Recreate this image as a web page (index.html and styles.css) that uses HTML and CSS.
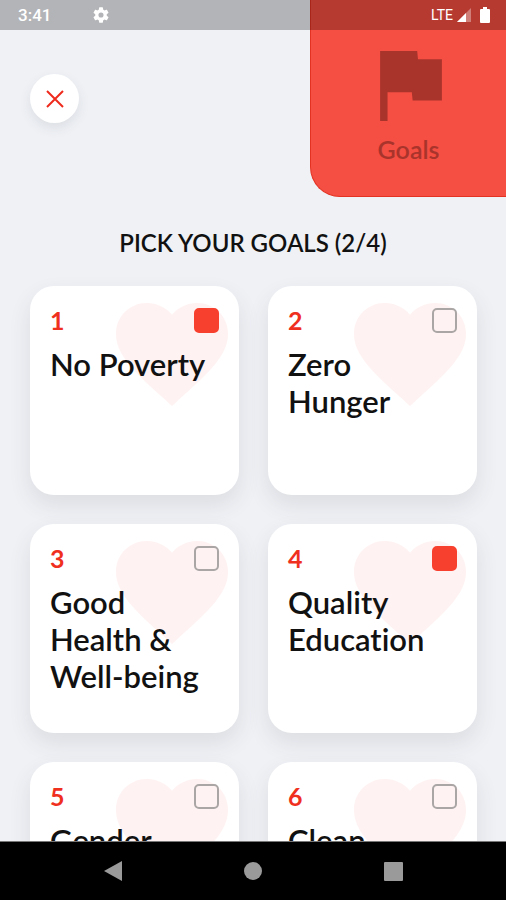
FILE: index.html
```html
<!DOCTYPE html>
<html lang="en">
<head>
<meta charset="utf-8">
<meta name="viewport" content="width=device-width, initial-scale=1">
<title>Pick your goals</title>
<link rel="stylesheet" href="styles.css">
</head>
<body>
<svg class="defs" aria-hidden="true">
  <symbol id="heart" viewBox="2 3 20 18.35"><path d="M12 21.35l-1.45-1.32C5.4 15.36 2 12.28 2 8.5 2 5.42 4.42 3 7.5 3c1.74 0 3.41.81 4.5 2.09C13.09 3.81 14.76 3 16.5 3 19.58 3 22 5.42 22 8.5c0 3.78-3.4 6.86-8.55 11.54z"/></symbol>
</svg>
<div class="status">
  <span class="clock">3:41</span>
  <svg class="gear" viewBox="2 2 20 20" aria-hidden="true"><path d="M19.14 12.94c.04-.3.06-.61.06-.94s-.02-.64-.07-.94l2.03-1.58a.49.49 0 0 0 .12-.61l-1.92-3.32a.49.49 0 0 0-.59-.22l-2.39.96a7 7 0 0 0-1.62-.94l-.36-2.54a.48.48 0 0 0-.48-.41h-3.84a.47.47 0 0 0-.47.41l-.36 2.54c-.59.24-1.13.57-1.62.94l-2.39-.96a.47.47 0 0 0-.59.22L2.74 8.87a.47.47 0 0 0 .12.61l2.03 1.58c-.05.3-.09.63-.09.94s.02.64.07.94l-2.03 1.58a.49.49 0 0 0-.12.61l1.92 3.32c.12.22.37.29.59.22l2.39-.96c.5.38 1.03.7 1.62.94l.36 2.54c.05.24.24.41.48.41h3.84c.24 0 .44-.17.47-.41l.36-2.54c.59-.24 1.13-.56 1.62-.94l2.39.96c.22.08.47 0 .59-.22l1.92-3.32a.47.47 0 0 0-.12-.61zM12 15.2a3.2 3.2 0 1 1 0-6.4 3.2 3.2 0 0 1 0 6.4z"/></svg>
  <span class="network">LTE</span>
  <svg class="signal" viewBox="0 0 14 14" aria-hidden="true"><path opacity=".35" d="M0 14L14 0v14z"/><path d="M0 14L9 5v9z"/></svg>
  <svg class="battery" viewBox="0 0 10 16" aria-hidden="true"><path d="M3 0h4v2h2a1 1 0 0 1 1 1v12a1 1 0 0 1-1 1H1a1 1 0 0 1-1-1V3a1 1 0 0 1 1-1h2z"/></svg>
</div>
<main class="screen">
  <header class="top">
    <button class="close" type="button" aria-label="Close">
      <svg viewBox="0 0 18 18" aria-hidden="true"><path d="M1 1l16 16M17 1L1 17"/></svg>
    </button>
    <button class="tab" type="button">
      <svg viewBox="5 4 15 17" aria-hidden="true"><path d="M14.2 6L14 4H5v17h1.8v-7h5.9l.2 2H20V6z"/></svg>
      <span>Goals</span>
    </button>
  </header>
  <h1 class="title">PICK YOUR GOALS (2/4)</h1>
  <div class="grid">
    <label class="card"><svg class="heart" aria-hidden="true"><use href="#heart"/></svg><span class="row"><span class="num">1</span><input type="checkbox" checked></span><span class="name">No Poverty</span></label>
    <label class="card"><svg class="heart" aria-hidden="true"><use href="#heart"/></svg><span class="row"><span class="num">2</span><input type="checkbox"></span><span class="name">Zero Hunger</span></label>
    <label class="card"><svg class="heart" aria-hidden="true"><use href="#heart"/></svg><span class="row"><span class="num">3</span><input type="checkbox"></span><span class="name">Good Health &amp; Well-being</span></label>
    <label class="card"><svg class="heart" aria-hidden="true"><use href="#heart"/></svg><span class="row"><span class="num">4</span><input type="checkbox" checked></span><span class="name">Quality Education</span></label>
    <label class="card"><svg class="heart" aria-hidden="true"><use href="#heart"/></svg><span class="row"><span class="num">5</span><input type="checkbox"></span><span class="name">Gender</span></label>
    <label class="card"><svg class="heart" aria-hidden="true"><use href="#heart"/></svg><span class="row"><span class="num">6</span><input type="checkbox"></span><span class="name">Clean</span></label>
  </div>
</main>
<nav class="navbar">
  <button type="button" aria-label="Back"><svg viewBox="0 0 20 20" aria-hidden="true"><path d="M1 10L19 0v20z"/></svg></button>
  <button type="button" aria-label="Home"><svg viewBox="0 0 20 20" aria-hidden="true"><circle cx="10" cy="10" r="9"/></svg></button>
  <button type="button" aria-label="Recent apps"><svg viewBox="0 0 20 20" aria-hidden="true"><rect x="1" y="1" width="19" height="19" rx="1"/></svg></button>
</nav>
</body>
</html>
```
FILE: styles.css
```css
* {
  box-sizing: border-box;
}

body {
  margin: 0;
  height: 100vh;
  display: flex;
  flex-direction: column;
  overflow: hidden;
  background: #eff1f5;
  color: #111;
  font-family: Lato, sans-serif;
  font-variant-ligatures: none;
}

button {
  padding: 0;
  border: 0;
  font: inherit;
}

.defs {
  position: absolute;
  width: 0;
  height: 0;
}

/* Translucent system bar lying over the app */
.status {
  position: absolute;
  z-index: 2;
  top: 0;
  left: 0;
  right: 0;
  height: 30px;
  padding: 0 16px 0 18px;
  display: flex;
  align-items: center;
  background: rgba(0, 0, 0, 0.25);
  color: #fff;
  font-family: Roboto, sans-serif;
}

.status svg {
  fill: #fff;
}

.clock {
  font-size: 17px;
  font-weight: 500;
}

.gear {
  width: 16px;
  height: 16px;
  margin-left: 42px;
}

.network {
  margin-left: auto;
  font-size: 14px;
}

.signal {
  width: 14px;
  height: 14px;
  margin-left: 4px;
}

.battery {
  width: 10px;
  height: 16px;
  margin-left: 9px;
}

.screen {
  flex: 1;
  min-height: 0;
  overflow: hidden;
}

.top {
  display: flex;
  justify-content: space-between;
  align-items: flex-start;
  padding-left: 30px;
}

.close {
  display: grid;
  place-items: center;
  width: 49px;
  height: 49px;
  margin-top: 74px;
  border-radius: 50%;
  background: #fff;
  box-shadow: 0 5px 12px rgba(60, 65, 75, 0.1);
}

.close svg {
  width: 18px;
  height: 18px;
  fill: none;
  stroke: #ee2a1c;
  stroke-width: 2;
}

.tab {
  display: flex;
  flex-direction: column;
  align-items: center;
  gap: 13px;
  width: 196px;
  height: 197px;
  padding-top: 51px;
  border: solid #e33222;
  border-width: 0 0 1px 1px;
  border-radius: 0 0 0 30px;
  background: #f54e42;
  color: #a9342c;
  font-size: 25px;
  line-height: 30px;
  font-weight: 600;
}

.tab svg {
  width: 62px;
  height: 70px;
  margin-left: 4px;
  fill: #a9342c;
}

.title {
  margin: 31px 0 28px;
  text-align: center;
  font-size: 24px;
  line-height: 30px;
  font-weight: 600;
}

.grid {
  display: grid;
  grid-template-columns: 1fr 1fr;
  gap: 29px;
  padding: 0 29px 0 30px;
}

.card {
  position: relative;
  display: flex;
  flex-direction: column;
  gap: 13px;
  aspect-ratio: 1;
  padding: 22px 20px;
  border-radius: 24px;
  background: #fff;
  box-shadow: 0 10px 22px rgba(60, 65, 75, 0.11);
}

.heart {
  position: absolute;
  top: 17px;
  right: 11px;
  width: 112px;
  height: 103px;
  fill: #fff2f2;
}

.row {
  position: relative;
  display: flex;
  justify-content: space-between;
  align-items: center;
}

.num {
  color: #f0301f;
  font-size: 25px;
  line-height: 25px;
  font-weight: 700;
}

.card input {
  appearance: none;
  width: 25px;
  height: 25px;
  margin: 0;
  border: 2px solid #aba6a6;
  border-radius: 5px;
}

.card input:checked {
  border-color: #f8402f;
  background: #f8402f;
}

.name {
  position: relative;
  font-size: 31px;
  line-height: 37px;
  font-weight: 600;
}

.navbar {
  display: flex;
  justify-content: center;
  gap: 120px;
  height: 59px;
  border-top: 1px solid #777;
  background: #000;
}

.navbar button {
  display: grid;
  place-items: center;
  width: 20px;
  background: none;
}

.navbar svg {
  width: 20px;
  height: 20px;
  fill: #9a9a9a;
}
```
